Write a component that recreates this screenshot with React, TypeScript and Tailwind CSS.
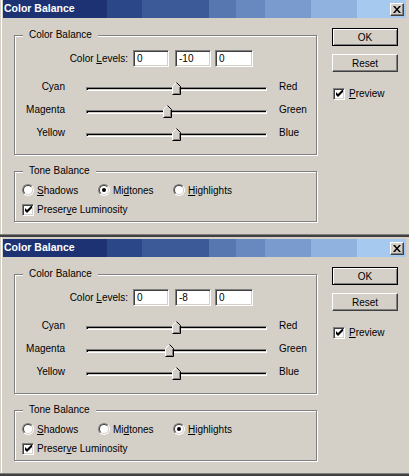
import React from "react";

type Tone = "shadows" | "midtones" | "highlights";

interface DialogProps {
    levels: number[];
    tone: Tone;
    first?: boolean;
}

const TRACK_W = 181;

function Sunken({ className, children }: { className?: string; children?: React.ReactNode }) {
    return (
        <div
            className={`border border-t-[#808080] border-l-[#808080] border-b-white border-r-white bg-white shadow-[inset_1px_1px_0_#404040,inset_-1px_-1px_0_#d4d0c8] ${className ?? ""}`}
        >
            {children}
        </div>
    );
}

function CheckBox() {
    return (
        <Sunken className="flex h-[12px] w-[12px] items-center justify-center">
            <svg width="7" height="7" viewBox="0 0 7 7">
                <path d="M0 2 L2 4 L7 -1 L7 2 L2 7 L0 5 Z" fill="#000" />
            </svg>
        </Sunken>
    );
}

function Radio({ on }: { on: boolean }) {
    return (
        <div className="h-[12px] w-[12px] rounded-full border border-t-[#808080] border-l-[#808080] border-b-white border-r-white">
            <div className="flex h-full w-full items-center justify-center rounded-full border border-t-[#404040] border-l-[#404040] border-b-[#d4d0c8] border-r-[#d4d0c8] bg-white">
                {on && <div className="h-[4px] w-[4px] rounded-full bg-black" />}
            </div>
        </div>
    );
}

function Thumb({ value }: { value: number }) {
    const left = ((value + 100) / 200) * TRACK_W - 1 - 4.5;
    return (
        <svg
            className="absolute top-[-6px]"
            style={{ left }}
            width="9"
            height="13"
            viewBox="0 0 9 13"
        >
            <path d="M0.5 12.5 V4.5 L4.5 0.5 L8.5 4.5 V12.5 Z" fill="#d4d0c8" />
            <path d="M0.5 12 V4.5 L4.5 0.5" stroke="#fff" fill="none" />
            <path d="M4.5 0.5 L8.5 4.5 V12.5 H0.5" stroke="#000" fill="none" />
            <path d="M7.5 5 V11.5 H1.5" stroke="#808080" fill="none" />
        </svg>
    );
}

function SliderRow({ left, right, value }: { left: string; right: string; value: number }) {
    return (
        <div className="flex h-[23px] items-center">
            <span className="mb-[5px] w-[50px] text-right">{left}</span>
            <div className="relative ml-[21px] h-[4px] w-[181px] border border-t-[#808080] border-l-[#808080] border-b-white border-r-white bg-[#d4d0c8] shadow-[inset_1px_1px_0_#000]">
                <Thumb value={value} />
            </div>
            <span className="mb-[5px] ml-[12px]">{right}</span>
        </div>
    );
}

function GroupBox({ label, className, children }: { label: string; className?: string; children: React.ReactNode }) {
    return (
        <div
            className={`relative w-[303px] border border-[#808080] shadow-[1px_1px_0_#fff,inset_1px_1px_0_#fff] ${className ?? ""}`}
        >
            <span className="absolute left-[8px] top-[-7px] bg-[#d4d0c8] px-[6px] leading-[12px]">{label}</span>
            {children}
        </div>
    );
}

function Button({ label, isDefault }: { label: string; isDefault?: boolean }) {
    return isDefault ? (
        <div className="flex h-[18px] w-[66px] items-center justify-center border border-black shadow-[inset_1px_1px_0_#fff,inset_-1px_-1px_0_#808080]">
            {label}
        </div>
    ) : (
        <div className="flex h-[18px] w-[66px] items-center justify-center border border-t-white border-l-white border-b-[#404040] border-r-[#404040] shadow-[inset_-1px_-1px_0_#808080]">
            {label}
        </div>
    );
}

function Dialog({ levels, tone, first }: DialogProps) {
    const magenta = levels[1];
    return (
        <div
            className={`${first ? "h-[237px]" : "h-[239px] pt-[2px]"} border-b-2 border-[#404040] bg-[#d4d0c8] px-[3px] shadow-[inset_0_-1px_0_#808080,inset_1px_0_0_#d4d0c8,inset_2px_0_0_#fff]`}
        >
            <div className="flex h-[18px] items-center justify-between bg-[linear-gradient(to_right,#1c3273_0px_104px,#2c4787_104px_139px,#3d5a98_139px_206px,#5677b0_206px_233px,#6888c0_233px_262px,#7a9bcd_262px_308px,#8fb2de_308px_354px,#a6c9f0_354px)] pl-[1px] pr-[2px]">
                <span className="text-[10.5px] font-bold text-white">Color Balance</span>
                <div className="flex h-[13px] w-[14px] items-center justify-center border border-t-white border-l-white border-b-[#404040] border-r-[#404040] bg-[#d4d0c8] shadow-[inset_-1px_-1px_0_#808080]">
                    <svg width="8" height="7" viewBox="0 0 8 7">
                        <path d="M0 0 H2 L4 2.5 L6 0 H8 L5 3.5 L8 7 H6 L4 4.5 L2 7 H0 L3 3.5 Z" fill="#000" />
                    </svg>
                </div>
            </div>

            <div className="flex items-start">
                <div className="ml-[11px] mt-[17px]">
                    <GroupBox label="Color Balance" className="h-[120px] pt-[14px]">
                        <div className="flex h-[17px] items-center">
                            <span className="w-[113px] text-right">
                                Color <u>L</u>evels:
                            </span>
                            <Sunken className="ml-[5px] flex h-[17px] w-[36px] items-center pl-[3px]">{levels[0]}</Sunken>
                            <Sunken className="ml-[6px] flex h-[17px] w-[36px] items-center pl-[3px]">{levels[1]}</Sunken>
                            <Sunken className="ml-[4px] flex h-[17px] w-[38px] items-center pl-[3px]">{levels[2]}</Sunken>
                        </div>
                        <div className="mt-[10px]">
                            <SliderRow left="Cyan" right="Red" value={levels[0]} />
                            <SliderRow left="Magenta" right="Green" value={magenta} />
                            <SliderRow left="Yellow" right="Blue" value={levels[2]} />
                        </div>
                    </GroupBox>

                    <GroupBox label="Tone Balance" className="mt-[16px] h-[51px] pl-[7px] pt-[12px]">
                        <div className="flex h-[12px] items-center">
                            <div className="flex w-[76px] items-center">
                                <Radio on={tone === "shadows"} />
                                <span className="ml-[3px]">
                                    <u>S</u>hadows
                                </span>
                            </div>
                            <div className="flex w-[75px] items-center">
                                <Radio on={tone === "midtones"} />
                                <span className="ml-[3px]">
                                    Mi<u>d</u>tones
                                </span>
                            </div>
                            <div className="flex items-center">
                                <Radio on={tone === "highlights"} />
                                <span className="ml-[3px]">
                                    <u>H</u>ighlights
                                </span>
                            </div>
                        </div>
                        <div className="mt-[6px] flex items-center">
                            <CheckBox />
                            <span className="ml-[3px]">
                                Preser<u>v</u>e Luminosity
                            </span>
                        </div>
                    </GroupBox>
                </div>

                <div className="ml-[15px] mt-[10px]">
                    <Button label="OK" isDefault />
                    <div className="mt-[8px]">
                        <Button label="Reset" />
                    </div>
                    <div className="ml-[1px] mt-[14px] flex items-center">
                        <CheckBox />
                        <span className="ml-[4px]">
                            <u>P</u>review
                        </span>
                    </div>
                </div>
            </div>
        </div>
    );
}

export default function App() {
    return (
        <div className="h-[476px] w-[409px] overflow-hidden bg-[#d4d0c8] font-['Liberation_Sans',Arial,sans-serif] text-[10px] text-black">
            <Dialog levels={[0, -10, 0]} tone="midtones" first />
            <Dialog levels={[0, -8, 0]} tone="highlights" />
        </div>
    );
}
